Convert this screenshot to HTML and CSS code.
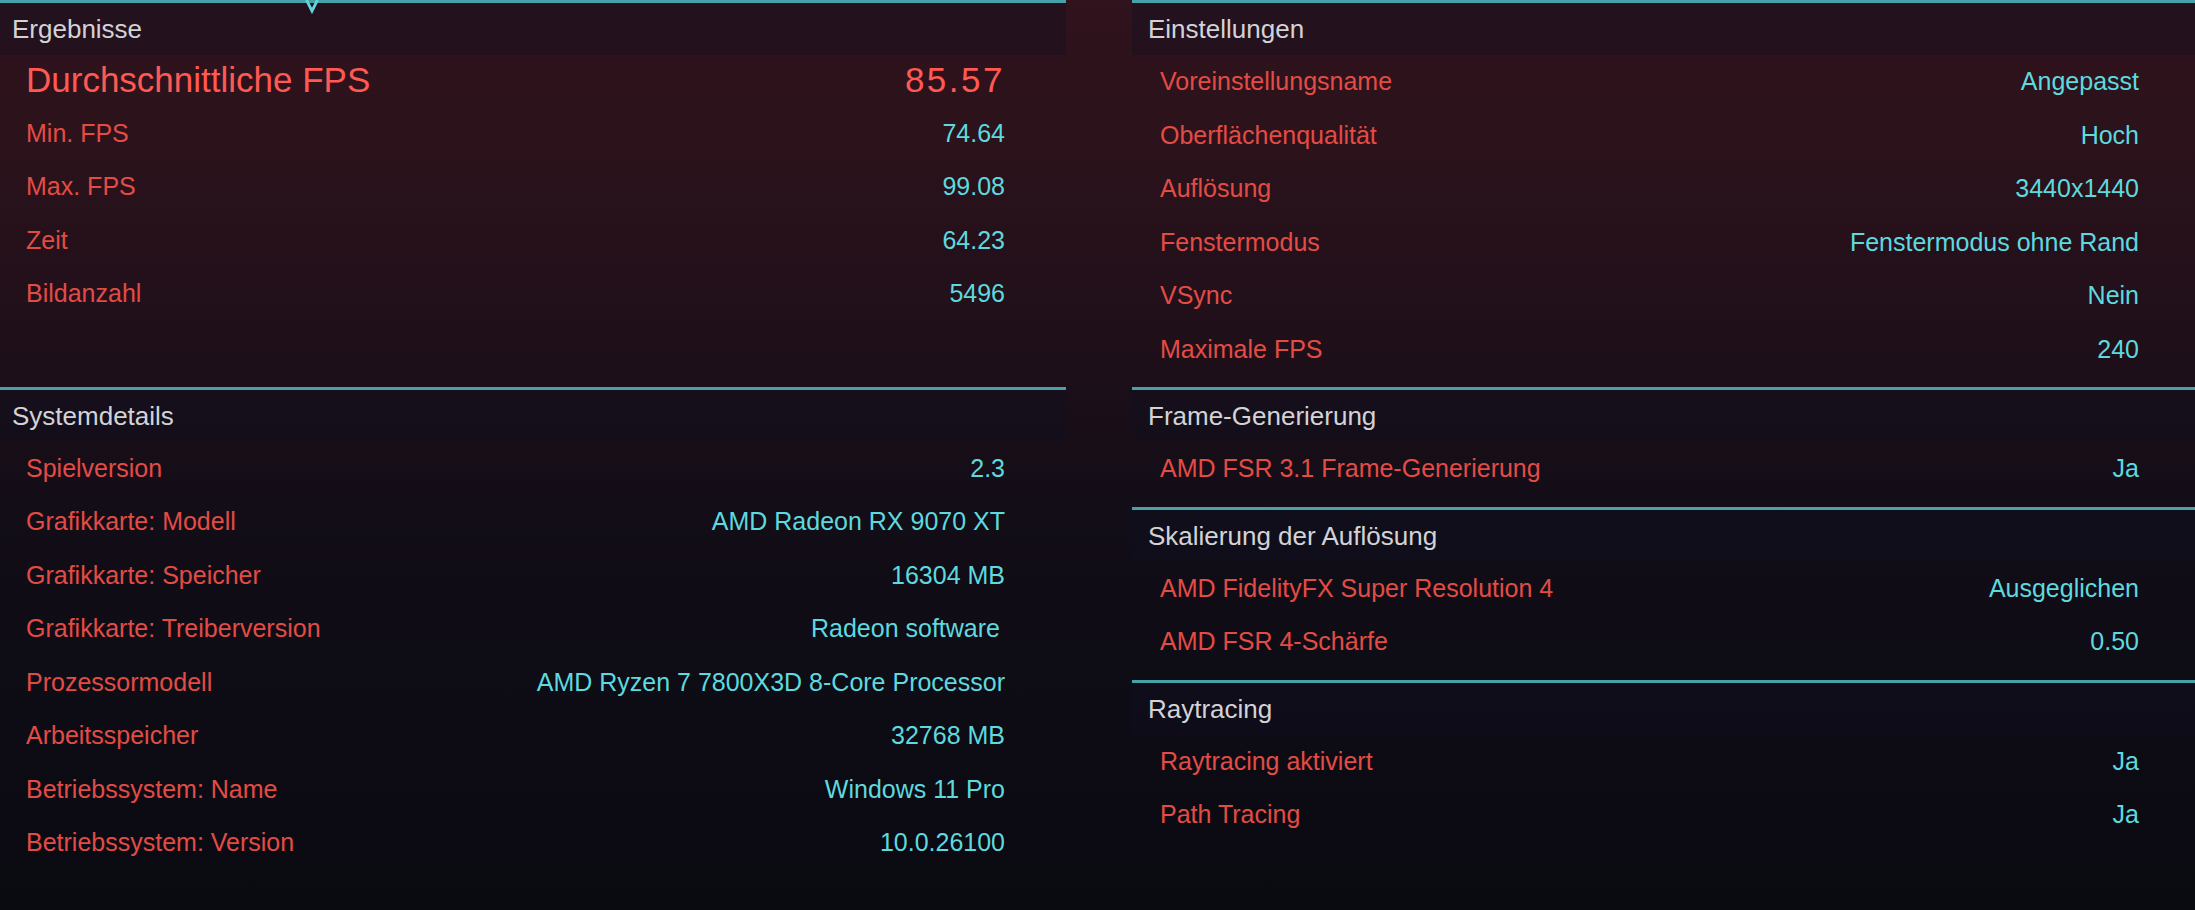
FILE: index.html
```html
<!DOCTYPE html>
<html lang="de">
<head>
<meta charset="utf-8">
<title>Benchmark-Ergebnisse</title>
<link rel="stylesheet" href="styles.css">
</head>
<body>
<main class="page">
  <div class="col col-left">
    <section class="sec sec-results">
      <svg class="chevron" width="14" height="14" viewBox="0 0 14 14" aria-hidden="true"><path d="M1.5 0 L7 11 L12.5 0" fill="none" stroke="#5fd6dc" stroke-width="2.8" stroke-linejoin="miter"/></svg>
      <h2 class="sec-head">Ergebnisse</h2>
      <div class="row row-big"><span class="lbl">Durchschnittliche FPS</span><span class="val">85.57</span></div>
      <div class="row"><span class="lbl">Min. FPS</span><span class="val">74.64</span></div>
      <div class="row"><span class="lbl">Max. FPS</span><span class="val">99.08</span></div>
      <div class="row"><span class="lbl">Zeit</span><span class="val">64.23</span></div>
      <div class="row"><span class="lbl">Bildanzahl</span><span class="val">5496</span></div>
    </section>
    <section class="sec">
      <h2 class="sec-head">Systemdetails</h2>
      <div class="row"><span class="lbl">Spielversion</span><span class="val">2.3</span></div>
      <div class="row"><span class="lbl">Grafikkarte: Modell</span><span class="val">AMD Radeon RX 9070 XT</span></div>
      <div class="row"><span class="lbl">Grafikkarte: Speicher</span><span class="val">16304 MB</span></div>
      <div class="row"><span class="lbl">Grafikkarte: Treiberversion</span><span class="val val-pad">Radeon software</span></div>
      <div class="row"><span class="lbl">Prozessormodell</span><span class="val">AMD Ryzen 7 7800X3D 8-Core Processor</span></div>
      <div class="row"><span class="lbl">Arbeitsspeicher</span><span class="val">32768 MB</span></div>
      <div class="row"><span class="lbl">Betriebssystem: Name</span><span class="val">Windows 11 Pro</span></div>
      <div class="row"><span class="lbl">Betriebssystem: Version</span><span class="val">10.0.26100</span></div>
    </section>
  </div>
  <div class="col col-right">
    <section class="sec">
      <h2 class="sec-head">Einstellungen</h2>
      <div class="row"><span class="lbl">Voreinstellungsname</span><span class="val">Angepasst</span></div>
      <div class="row"><span class="lbl">Oberflächenqualität</span><span class="val">Hoch</span></div>
      <div class="row"><span class="lbl">Auflösung</span><span class="val">3440x1440</span></div>
      <div class="row"><span class="lbl">Fenstermodus</span><span class="val">Fenstermodus ohne Rand</span></div>
      <div class="row"><span class="lbl">VSync</span><span class="val">Nein</span></div>
      <div class="row"><span class="lbl">Maximale FPS</span><span class="val">240</span></div>
    </section>
    <section class="sec">
      <h2 class="sec-head">Frame-Generierung</h2>
      <div class="row"><span class="lbl">AMD FSR 3.1 Frame-Generierung</span><span class="val">Ja</span></div>
    </section>
    <section class="sec">
      <h2 class="sec-head">Skalierung der Auflösung</h2>
      <div class="row"><span class="lbl">AMD FidelityFX Super Resolution 4</span><span class="val">Ausgeglichen</span></div>
      <div class="row"><span class="lbl">AMD FSR 4-Schärfe</span><span class="val">0.50</span></div>
    </section>
    <section class="sec">
      <h2 class="sec-head">Raytracing</h2>
      <div class="row"><span class="lbl">Raytracing aktiviert</span><span class="val">Ja</span></div>
      <div class="row"><span class="lbl">Path Tracing</span><span class="val">Ja</span></div>
    </section>
  </div>
</main>
</body>
</html>
```

FILE: styles.css
```css
html, body {
  margin: 0;
  padding: 0;
}

body {
  width: 2195px;
  height: 910px;
  overflow: hidden;
  font-family: "Liberation Sans", Arial, sans-serif;
  background: linear-gradient(180deg,
    #30131c 0px,
    #2b121b 140px,
    #22101a 300px,
    #1a0e18 400px,
    #120d17 520px,
    #0e0c15 680px,
    #0a0a11 910px);
}

.page {
  display: flex;
  gap: 66px;
  height: 910px;
}

.col {
  display: flex;
  flex-direction: column;
}

.col-left {
  width: 1066px;
  flex: none;
}

.col-right {
  flex: 1;
}

.sec {
  position: relative;
  border-top: 3px solid #47a2a8;
  padding-bottom: 11px;
}

.sec-results {
  padding-bottom: 66px;
}

.chevron {
  position: absolute;
  top: -3px;
  left: 305px;
}

.sec-head {
  margin: 0;
  height: 52px;
  display: flex;
  align-items: center;
  padding: 1px 0 0 12px;
  box-sizing: border-box;
  font-size: 26px;
  font-weight: normal;
  color: #d3d3d6;
  background: rgba(16, 16, 34, 0.38);
}

.col-right .sec-head {
  padding-left: 16px;
}

.row {
  height: 53.5px;
  display: flex;
  align-items: center;
  justify-content: space-between;
  padding: 0 61px 0 26px;
  font-size: 25px;
}

.col-right .row {
  padding: 0 56px 0 28px;
}

.lbl {
  color: #e34c45;
}

.val {
  color: #5dd9df;
}

.val-pad {
  padding-right: 5px;
}

.row-big {
  margin-top: -2px;
}

.row-big .lbl {
  font-size: 35px;
  color: #ff5954;
}

.row-big .val {
  font-size: 35px;
  letter-spacing: 2.5px;
  color: #ff5954;
}
```
